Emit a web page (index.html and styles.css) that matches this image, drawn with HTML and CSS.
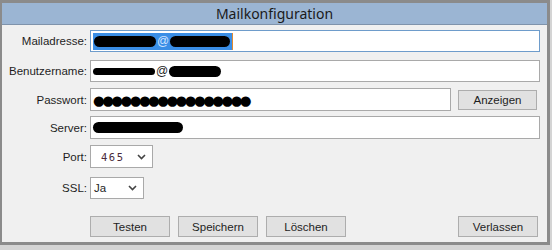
FILE: index.html
```html
<!DOCTYPE html>
<html lang="de">
<head>
<meta charset="utf-8">
<title>Mailkonfiguration</title>
<link rel="stylesheet" href="styles.css">
</head>
<body>
<div class="window">
  <div class="titlebar">Mailkonfiguration</div>
  <div class="form">
    <div class="row r-mail">
      <label class="lbl">Mailadresse:</label>
      <div class="input focused full">
        <span class="sel"><span class="blob" style="width:62px"></span><span class="at">@</span><span class="blob" style="width:60px"></span></span>
      </div>
    </div>
    <div class="row r-user">
      <label class="lbl">Benutzername:</label>
      <div class="input full">
        <span class="blob thin" style="width:62px"></span><span class="at dark">@</span><span class="blob" style="width:52px"></span>
      </div>
    </div>
    <div class="row r-pass">
      <label class="lbl">Passwort:</label>
      <div class="input pass">●●●●●●●●●●●●●●●●●</div>
      <button class="btn show">Anzeigen</button>
    </div>
    <div class="row r-server">
      <label class="lbl">Server:</label>
      <div class="input full">
        <span class="blob" style="width:90px"></span>
      </div>
    </div>
    <div class="row r-port">
      <label class="lbl">Port:</label>
      <div class="select port"><span class="val mono">465</span>
        <svg class="chev" width="9" height="6" viewBox="0 0 9 6"><polyline points="1,1 4.5,4.5 8,1" fill="none" stroke="#444" stroke-width="1.6"/></svg>
      </div>
    </div>
    <div class="row r-ssl">
      <label class="lbl">SSL:</label>
      <div class="select ssl"><span class="val">Ja</span>
        <svg class="chev" width="9" height="6" viewBox="0 0 9 6"><polyline points="1,1 4.5,4.5 8,1" fill="none" stroke="#444" stroke-width="1.6"/></svg>
      </div>
    </div>
    <div class="actions">
      <button class="btn">Testen</button>
      <button class="btn">Speichern</button>
      <button class="btn">Löschen</button>
      <button class="btn leave">Verlassen</button>
    </div>
  </div>
</div>
</body>
</html>
```
FILE: styles.css
```css
html, body {
  margin: 0;
  padding: 0;
}
body {
  background: #d4d4d4;
  width: 552px;
  height: 250px;
  font-family: "Liberation Sans", Arial, sans-serif;
  font-size: 11.5px;
  color: #1e1e1e;
}
.window {
  box-sizing: border-box;
  width: 550px;
  height: 245px;
  border: 3px solid #8b8b8b;
  border-left-width: 2px;
  background: #f0f0f0;
  display: flex;
  flex-direction: column;
}
.titlebar {
  height: 21px;
  background: #9bb5d3;
  border-bottom: 1px solid #7f93ab;
  text-align: center;
  font-family: "Noto Sans", "Liberation Sans", sans-serif;
  font-size: 14px;
  line-height: 21px;
  color: #1a1a1a;
}
.form {
  display: flex;
  flex-direction: column;
  padding: 5px 7px 0 0;
}
.row {
  display: flex;
  align-items: center;
}
.r-mail { height: 22px; }
.r-user { height: 22px; margin-top: 8px; }
.r-pass { height: 23px; margin-top: 6px; }
.r-server { height: 23px; margin-top: 5px; }
.r-port { height: 23px; margin-top: 6px; }
.r-ssl { height: 22px; margin-top: 9px; }
.lbl {
  width: 85px;
  flex: none;
  text-align: right;
  margin-right: 3px;
}
.input, .select {
  box-sizing: border-box;
  height: 100%;
  background: #fff;
  border: 1px solid #a9a9a9;
  display: flex;
  align-items: center;
  padding-left: 2px;
}
.full { flex: 1; }
.focused { border-color: #6e9ccb; }
.pass {
  width: 361px;
  font-family: "DejaVu Sans", sans-serif;
  font-size: 13.5px;
  letter-spacing: -2.6px;
  padding-left: 2px;
  color: #000;
  overflow: hidden;
  white-space: nowrap;
}
.sel {
  display: flex;
  align-items: center;
  background: #3a8ee6;
  height: 17px;
  padding: 0 2px 0 1px;
  border-right: 1px solid #e08a30;
}
.blob {
  display: inline-block;
  height: 11px;
  background: #000;
  border-radius: 6px;
}
.blob.thin { height: 7px; }
.at {
  color: #cfe3ff;
  font-size: 12px;
  margin: 0 1px;
}
.at.dark { color: #222; }
.btn {
  box-sizing: border-box;
  width: 80px;
  height: 20px;
  background: #e1e1e1;
  border: 1px solid #adadad;
  font-family: "Liberation Sans", Arial, sans-serif;
  font-size: 11.5px;
  color: #1e1e1e;
  padding: 0;
}
.show { margin-left: 7px; width: 79px; }
.select {
  justify-content: space-between;
  padding: 0 6px 0 3px;
}
.port { width: 63px; }
.port .val { padding-left: 7px; color: #4a2a3a; }
.ssl { width: 54px; }
.mono {
  font-family: "DejaVu Sans Mono", monospace;
  font-size: 10.5px;
  letter-spacing: 1.5px;
}
.chev { display: block; }
.actions {
  display: flex;
  gap: 8px;
  margin-top: 17px;
  margin-left: 88px;
  padding-right: 2px;
}
.actions .btn { height: 21px; }
.leave { margin-left: auto; }
```
